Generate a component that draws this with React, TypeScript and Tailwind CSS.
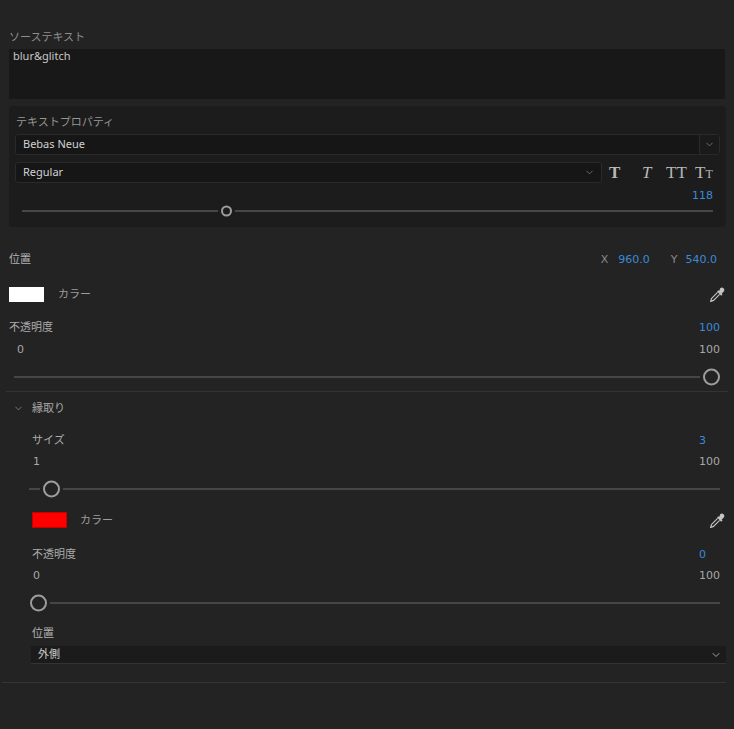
import { ChevronDown } from "lucide-react";

type SliderProps = {
    value: number;
    min: number;
    max: number;
    big?: boolean;
    className?: string;
};

// thumb sits over the track, so it is the one absolutely placed piece
function Slider({ value, min, max, big, className }: SliderProps) {
    const pct = (value - min) / (max - min);
    const d = big ? 17 : 11;
    return (
        <div className={`relative ${big ? "h-[18px]" : "h-[14px]"} ${className ?? ""}`}>
            <div className="absolute inset-x-0 top-1/2 h-[2px] -translate-y-1/2 bg-[#464646]" />
            <div
                className={`absolute top-1/2 -translate-y-1/2 rounded-full border-2 border-[#9d9d9d] ${
                    big
                        ? "h-[17px] w-[17px] bg-[#232323] shadow-[0_0_0_3px_#232323]"
                        : "h-[11px] w-[11px] bg-[#1c1c1c] shadow-[0_0_0_3px_#1c1c1c]"
                }`}
                style={{ left: `calc(${pct} * (100% - ${d}px))` }}
            />
        </div>
    );
}

function Dropper() {
    return (
        <svg width="17" height="17" viewBox="0 0 17 17">
            <path
                d="M11.2 2.3a2.1 2.1 0 0 1 3.4 3.4l-1.9 1.9.8.8-1.3 1.3-4.1-4.1 1.3-1.3.8.8z"
                fill="#c4c4c4"
            />
            <path
                d="M8.6 6.4 2.6 12.4 1.6 15.4 4.6 14.4 10.6 8.4"
                fill="none"
                stroke="#c4c4c4"
                strokeWidth="1.2"
                strokeLinejoin="round"
            />
        </svg>
    );
}

const num = "font-['DejaVu_Sans',sans-serif] text-[11px] pt-[2px]";

function MinMax({ min, max, className }: { min: string; max: string; className?: string }) {
    return (
        <div className={`flex h-4 items-center justify-between pr-[5px] leading-4 text-[#a8a8a8] ${className ?? ""}`}>
            <span className={num}>{min}</span>
            <span className={`w-[21px] ${num}`}>{max}</span>
        </div>
    );
}

function ValueRow({ label, value, className }: { label: string; value: string; className?: string }) {
    return (
        <div className={`flex h-4 items-center justify-between pr-[5px] leading-4 ${className ?? ""}`}>
            <span className="text-[#ababab]">{label}</span>
            <span className={`w-[21px] text-[#3b8ad9] ${num}`}>{value}</span>
        </div>
    );
}

export default function App() {
    return (
        <div className="h-[729px] w-[734px] overflow-hidden bg-[#232323] px-[9px] pt-[29px] font-['Noto_Sans','Noto_Sans_CJK_JP',sans-serif] text-[11px]">
            <div className="h-4 leading-4 text-[#8e8e8e]">ソーステキスト</div>
            <div className="mt-[4px] h-[50px] bg-[#181818] pl-[4px] leading-[14px] text-[#c8c8c8]">
                blur&amp;glitch
            </div>

            {/* テキストプロパティ */}
            <div className="mt-[7px] h-[121px] w-[717px] rounded-[4px] bg-[#1c1c1c] px-[6px] pt-[8px]">
                <div className="h-4 pl-[1px] leading-4 text-[#959595]">テキストプロパティ</div>
                <div className="mt-[4px] flex h-[21px] rounded-[3px] border border-[#2a2a2a] bg-[#161616]">
                    <div className="flex flex-1 items-center pl-[7px] text-[#d2d2d2]">Bebas Neue</div>
                    <div className="flex w-[20px] items-center justify-center border-l border-[#2a2a2a] bg-[#1a1a1a]">
                        <ChevronDown size={11} strokeWidth={1.5} color="#8a8a8a" />
                    </div>
                </div>
                <div className="mt-[7px] flex h-[21px]">
                    <div className="flex w-[587px] items-center justify-between rounded-[3px] border border-[#2a2a2a] bg-[#161616] pl-[7px] pr-[6px] text-[#d2d2d2]">
                        <span>Regular</span>
                        <ChevronDown size={11} strokeWidth={1.5} color="#8a8a8a" />
                    </div>
                    <div className="flex flex-1 items-center pl-[7px] font-['Liberation_Serif',serif] text-[17px] leading-none text-[#b8b8b8]">
                        <span className="w-[29px] font-bold">T</span>
                        <span className="w-[26px] pl-[4px] italic">T</span>
                        <span className="w-[31px] pl-[2px]">TT</span>
                        <span>
                            T<span className="text-[12px]">T</span>
                        </span>
                    </div>
                </div>
                <div className="mt-[5px] flex h-[14px] items-center justify-end pr-[7px] leading-[14px] text-[#3b8ad9]">
                    <span className={num}>118</span>
                </div>
                <Slider value={118} min={1} max={400} className="mx-[7px] mt-[2px]" />
            </div>

            {/* 位置 */}
            <div className="mt-[24px] flex h-4 items-center justify-between pr-[8px] leading-4">
                <span className="text-[#b2b2b2]">位置</span>
                <div className={`flex items-center ${num}`}>
                    <span className="text-[#8a8a8a]">X</span>
                    <span className="ml-[10px] text-[#3b8ad9]">960.0</span>
                    <span className="ml-[21px] text-[#8a8a8a]">Y</span>
                    <span className="ml-[8px] text-[#3b8ad9]">540.0</span>
                </div>
            </div>

            <div className="mt-[17px] flex h-[20px] items-center">
                <div className="h-[15px] w-[35px] bg-white" />
                <span className="ml-[14px] text-[#9d9d9d]">カラー</span>
                <div className="-mr-[1px] ml-auto">
                    <Dropper />
                </div>
            </div>

            <ValueRow label="不透明度" value="100" className="mt-[15px]" />
            <MinMax min="0" max="100" className="mt-[6px] pl-[8px]" />
            <Slider value={100} min={0} max={100} big className="mx-[5px] mt-[11px]" />

            <div className="-mx-[3px] mt-[5px] h-px bg-[#343434]" />

            {/* 縁取り */}
            <div className="mt-[8px] flex h-4 items-center pl-[4px] leading-4">
                <ChevronDown size={11} strokeWidth={1.5} color="#9a9a9a" />
                <span className="ml-[8px] text-[#a8a8a8]">縁取り</span>
            </div>

            <div className="pl-[23px]">
                <ValueRow label="サイズ" value="3" className="mt-[16px]" />
                <MinMax min="1" max="100" className="mt-[5px] pl-[1px]" />
                <Slider value={3} min={1} max={100} big className="-ml-[3px] mr-[5px] mt-[11px]" />

                <div className="mt-[12px] flex h-[20px] items-center">
                    <div className="h-[16px] w-[35px] border border-[#c40000] bg-[#ff0000]" />
                    <span className="ml-[13px] text-[#9d9d9d]">カラー</span>
                    <div className="-mr-[1px] ml-auto">
                        <Dropper />
                    </div>
                </div>

                <ValueRow label="不透明度" value="0" className="mt-[16px]" />
                <MinMax min="0" max="100" className="mt-[5px] pl-[1px]" />
                <Slider value={0} min={0} max={100} big className="-ml-[2px] mr-[5px] mt-[11px]" />

                <div className="mt-[13px] h-4 leading-4 text-[#b2b2b2]">位置</div>
                <div className="-mx-[1px] mt-[5px] flex h-[18px] items-center justify-between border-b border-[#333] bg-[#1b1b1b] pl-[7px] pr-[4px] text-[#d0d0d0]">
                    <span>外側</span>
                    <ChevronDown size={12} strokeWidth={2} color="#a0a0a0" />
                </div>
            </div>

            <div className="-ml-[7px] -mr-[1px] mt-[18px] h-px bg-[#343434]" />
        </div>
    );
}
